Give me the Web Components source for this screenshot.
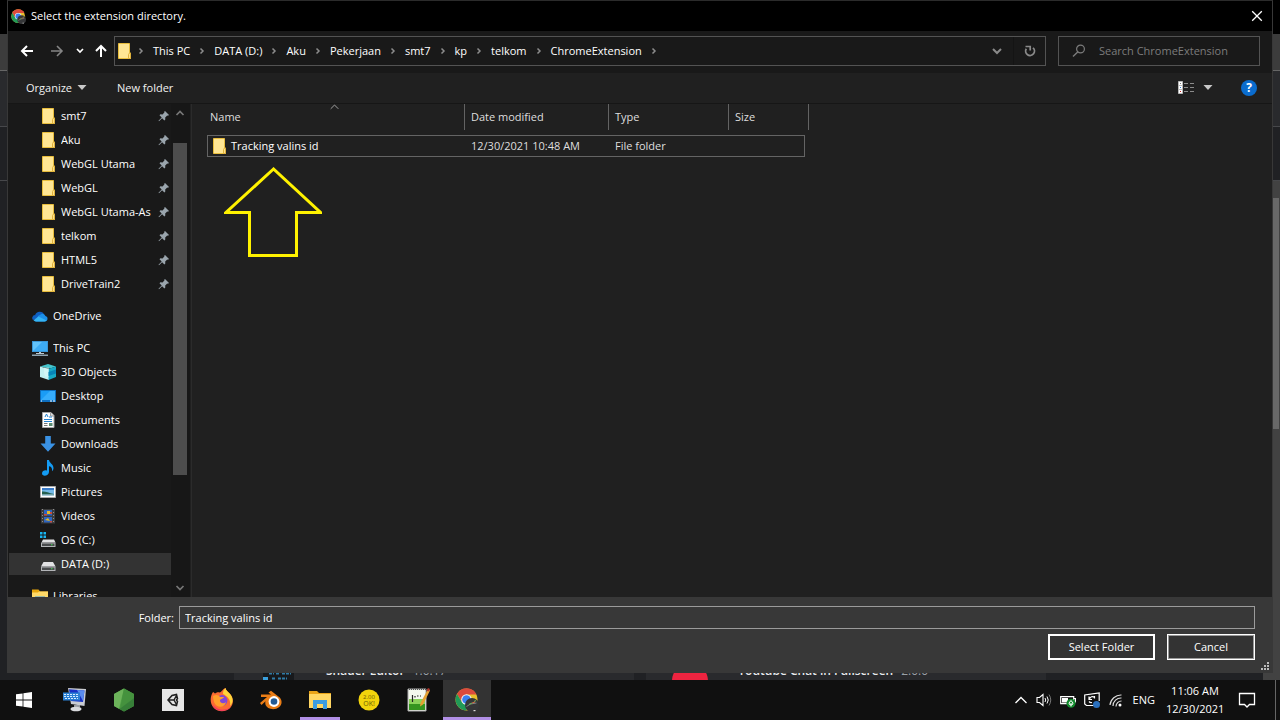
<!DOCTYPE html>
<html lang="en">
<head>
<meta charset="utf-8">
<title>Select the extension directory.</title>
<style>
  html, body { margin: 0; height: 100%; background: #202124; }
  body { font: 11px/16px "Open Sans", "Noto Sans", sans-serif; color: #fff; overflow: hidden; }
</style>
</head>
<body>
<desk-top></desk-top>

<script>
const icons = {
  folder: ['0 0 16 16', '<path d="M2.5.5h11v9.500h1v5.500h-12z" fill="#ffe28a" stroke="#e8bd3c"/><path d="M3 1h10v14H3z" fill="#ffe694"/><path d="M12.500 15.500v-4l1-1.500h1v5.500z" fill="#ffe28a" stroke="#e0b23c"/>'],
  pin: ['0 0 12 12', '<path d="M7 1l4 4-1 .8-.8-.2-2 2 .1 2-.9.9-2.300-2.300L1 11.300l-.5-.5L3.700 7.500 1.500 5.200l.9-.9 2.100.1 1.900-1.900-.2-.8z" fill="#9aa5ad"/>'],
  onedrive: ['0 0 16 16', '<path d="M3 7.500a5 5 0 0 1 9-1.500l-4 4-7 2A3 3 0 0 1 3 7z" fill="#0f5fc0"/><path d="M10 5.700a4 4 0 0 1 3.500 2.300A2.800 2.800 0 0 1 13 13.500H3.500L6 8z" fill="#1c8fe8"/><path d="M1.500 12.300 6.500 8.500l8 4a3 3 0 0 1-2 1H3.500a3 3 0 0 1-2-1.200z" fill="#35b4f4"/>'],
  pc: ['0 0 16 16', '<path d="M0 1h16v11H0z" fill="#3a97d8"/><path d="M1 2h14v9H1z" fill="#62c3fb"/><path d="M1 11 10 2h5v9z" fill="#3dacf5"/><path d="M7 12h2v1.500H7zM4 13h8v1H4z" fill="#b9c8d2"/><path d="M0 14.500h16V16H0z" fill="#8ea2af"/>'],
  cube: ['0 0 16 16', '<path d="M8 0l8 2.500-6 2L0 2.500z" fill="#45c5cc"/><path d="M0 2.500 9 5v11l-9-3z" fill="#c3f1f2"/><path d="M8.500 5 16 2.500V13l-7.500 3z" fill="#18a9c6"/><path d="M4 3.500h5v9H5L4 9z" fill="#e2fbfa" opacity=".5"/><path d="M8.500 8 16 5.500v4L8.500 12z" fill="#0784b8"/>'],
  desktop: ['0 0 16 16', '<path d="M0 2h16v12H0z" fill="#0d6fc0"/><path d="M1 3h14v9H1z" fill="#1a9cf6"/><path d="M1 12 10 3h5v9z" fill="#36adfc"/><path d="M1 12.500h1v1H1zM10 12.500h2v1h-2zM13 12.500h2v1h-2z" fill="#fff"/>'],
  document: ['0 0 16 16', '<path d="M2.500.5h8.500l3 3v12h-11.500z" fill="#fff" stroke="#a8a8a8"/><path d="M10.500.5v3.500H14" fill="#ddd" stroke="#999"/><path d="M5 5l1.500-3L8 5M9 5h3M4 7.500h8M4 9.500h8" stroke="#2482d0" fill="none"/><path d="M4 11.500h3.500M4 13.500h3.500" stroke="#777"/><path d="M9 11h3.500v3H9z" fill="#5c8d72"/>'],
  download: ['0 0 16 16', '<path d="M5.200 0h5.600v7.500H15.500L8 15.800.5 7.500h4.700z" fill="#3a92e4"/>'],
  music: ['0 0 16 16', '<path d="M7 0h2c.2 3 4.500 4 4.500 8 0 1.500-.7 2.500-1.500 3.300C12.500 8 11 6.500 9 6.200V12c0 4-7 5-7 1.500 0-2.500 3-3.800 5-2.800z" fill="#149cf4"/>'],
  picture: ['0 0 16 16', '<path d="M.5 2.500h15v11H.5z" fill="#fff" stroke="#a9a9a9"/><path d="M2 4h12v8H2z" fill="#74b9e8"/><path d="M2 4h12v2H2z" fill="#3a7bc8"/><path d="M2 7.500c3-.5 6 1 12 2.500v.8H2z" fill="#25614f"/><path d="M2 10.500h12V12H2z" fill="#a9cbd8"/>'],
  video: ['0 0 16 16', '<path d="M1 1h14v14.500H1z" fill="#3c3c3c"/><path d="M4 2h8v5.500H4zM4 9h8v5.500H4z" fill="#2d65c0"/><path d="M7 3h3v3H7zM5 12l3-2 2 3z" fill="#e5b827"/><path d="M4 6h3v1.500H4zM10 4h2v2h-2zM10 13h2v1.500h-2z" fill="#c94b38"/><path d="M2.500 1v15M13.500 1v15" stroke="#8c8c8c" stroke-width="1" stroke-dasharray="1 2"/>'],
  osdrive: ['0 0 16 16', '<path d="M0 0h2.500v2.500H0zM3.500 0H6v2.500H3.500zM0 3.500h2.500V6H0zM3.500 3.500H6V6H3.500z" fill="#18b5f2"/><path d="M3 7.500h11l1.500 3h-14z" fill="#e2e2e4"/><path d="M1 10.500h14.500V15H1z" fill="#b3b5b8"/><path d="M2 11.500h12.500V14H2z" fill="#494b4d"/><path d="M11 12.300h1.500v1H11z" fill="#42e052"/>'],
  drive: ['0 0 16 16', '<path d="M3.500 6h9.500l2.500 4.500h-14.500z" fill="#e2e2e4"/><path d="M1 10.500h14.500V15H1z" fill="#b3b5b8"/><path d="M2 11.500h12.500V14H2z" fill="#494b4d"/><path d="M11 12.300h1.500v1H11z" fill="#42e052"/>'],
  library: ['0 0 16 16', '<path d="M0 1.500h6.500L8 3.500h8V8H0z" fill="#e8a60c"/><path d="M0 4.500h6l1-1h9V16H0z" fill="#ffd968"/><path d="M3 8.500h10V16H3z" fill="#3c9be0"/>'],
  back: ['0 0 14 14', '<path d="M13 7H2M7 2 2 7l5 5" fill="none" stroke="currentColor" stroke-width="2"/>'],
  forward: ['0 0 14 14', '<path d="M1 7h11M7 2l5 5-5 5" fill="none" stroke="currentColor" stroke-width="1.600"/>'],
  up: ['0 0 14 14', '<path d="M7 13V2M2 7l5-5 5 5" fill="none" stroke="currentColor" stroke-width="2"/>'],
  down: ['0 0 8 8', '<path d="M1 2l3 3 3-3" fill="none" stroke="currentColor" stroke-width="1.700"/>'],
  bigdown: ['0 0 12 12', '<path d="M2 4l4 4 4-4" fill="none" stroke="currentColor" stroke-width="2"/>'],
  crumb: ['0 0 8 8', '<path d="M2.500 1.500 5 4 2.500 6.500" fill="none" stroke="#8c8c8c" stroke-width="1.500"/>'],
  refresh: ['0 0 12 12', '<path d="M2.300 3.800A4.400 4.400 0 1 0 9 2.800" fill="none" stroke="currentColor" stroke-width="1.800"/><path d="M1.500 1.500h4.700v4" fill="none" stroke="currentColor" stroke-width="1.700"/>'],
  search: ['0 0 14 14', '<circle cx="8.500" cy="5" r="3.900" fill="none" stroke="#7c7c7c" stroke-width="1.200"/><path d="M5.700 8 1 12.500" stroke="#7c7c7c" stroke-width="1.400"/>'],
  close: ['0 0 12 12', '<path d="M1.200 1.200l9.600 9.600M10.800 1.200 1.200 10.800" stroke="#fff" stroke-width="1.300"/>'],
  triangle: ['0 0 10 6', '<path d="M.5 0h9L5 5z" fill="currentColor"/>'],
  sort: ['0 0 9 6', '<path d="M.7 4.800 4.500 1l3.800 3.800" fill="none" stroke="#a0a0a0"/>'],
  view: ['0 0 17 14', '<path d="M.5.5h4v12h-4z" fill="#fff" stroke="#b8b8b8"/><path d="M0 4.500h5M0 8.500h5" stroke="#b8b8b8"/><path d="M2 2h1v1H2z" fill="#777"/><path d="M2 6h1v1H2z" fill="#2976d2"/><path d="M2 10h1v1H2z" fill="#c22"/><path d="M6 2.500h4M12 2.500h4M6 6.500h4M12 6.500h4M6 10.500h4M12 10.500h4" stroke="#8b8b8b"/>'],
  scrollup: ['0 0 10 8', '<path d="M1.500 6 5 2.500 8.500 6" fill="none" stroke="#777" stroke-width="1.700"/>'],
  scrolldown: ['0 0 10 8', '<path d="M1.500 2 5 5.500 8.500 2" fill="none" stroke="#777" stroke-width="1.700"/>'],
  grip: ['0 0 9 9', '<path d="M6 0h2v2H6zM3 3h2v2H3zM6 3h2v2H6zM0 6h2v2H0zM3 6h2v2H3zM6 6h2v2H6z" fill="#bdbdbd"/>'],
  chrome: ['0 0 24 24', '<circle cx="11.500" cy="11.500" r="11" fill="#e8bf2c"/><path d="M2 6A11 11 0 0 1 21.500 6.500H11.500L7 14z" fill="#dc4a3d"/><path d="M2 6a11 11 0 0 0 9 16.500l5-8.500-9.500-.5z" fill="#219a57"/><circle cx="11.500" cy="11.500" r="5.300" fill="#f3f5f8"/><circle cx="11.500" cy="11.500" r="4.300" fill="#3b7ff0"/><circle cx="17" cy="17" r="7" fill="#353638"/><path d="M11.500 18.500l4-2.500 6-1" stroke="#7d8185" fill="none"/><path d="M14 16.500l3-1.500M19 13.500l2-1" stroke="#6ca857" stroke-width="1.200"/><path d="M17 15l3-1" stroke="#d06a42"/><path d="M18.500 22h2v1.200h-2z" fill="#ddd"/>'],
  windows: ['0 0 16 16', '<path d="M0 2.300 6.600 1.400v6.200H0zM7.400 1.300 16 0v7.600H7.400zM0 8.400h6.600v6.200L0 13.700zM7.400 8.400H16V16l-8.600-1.300z" fill="#fff"/>'],
  keyboardpc: ['0 0 24 24', '<path d="M5 0 23 1l-1.500 17L8 16z" fill="#c9ccd2"/><path d="M6 1.300 21.500 2.500 20 14 8 13z" fill="#1832c4"/><path d="M14 1.900l7.500.6L20 13z" fill="#5a8cf0"/><path d="M0 4.500h17v8H0z" fill="#2b80d4"/><path d="M1 6.500h15M1 8.500h15M2 10.500h13" stroke="#d5ecff" stroke-dasharray="2 1"/><path d="M11 17h6v2.500H11z" fill="#9a9da3"/><ellipse cx="13" cy="21" rx="5.500" ry="2.300" fill="#d9dadd"/>'],
  node: ['0 0 24 24', '<path d="M12 .5 22 6v12l-10 5.500L2 18V6z" fill="#4f9e45"/><path d="M12 .5 2 6v12l5 2.800z" fill="#6cb35a"/><path d="M12 .5 22 6v4L8 21z" fill="#45923e"/><path d="M22 10v8l-10 5.500L7.500 21z" fill="#377f38"/>'],
  unity: ['0 0 24 24', '<path d="M1 1h22v22H1z" fill="#e6e6e6"/><path d="M7 12l4-4.500 4.500-1 1 4-1 1.500 1 1.500-1 4-4.500-1zM7 12h6M13 12l2.500-4.500M13 12l2.500 4.500" fill="none" stroke="#202020" stroke-width="1.500"/>'],
  firefox: ['0 0 24 24', '<path d="M3 4c.4-.2 1 .8 2 1.500C7 4 8.500 4 9.500 4.500 12 4 12.500 1 15.500 0c.3 2.500 3 4 5 6.500 3 4 3.300 9 0 13-4 4.500-12 5-16.500.7C-.2 16-.3 9 3 4z" fill="#fb6b32"/><path d="M15.500 0c.3 2.500 3 4 5 6.500 3 4 3 8-.5 11.500C21.500 12 17 8 13 6c0-3 1-5 2.500-6z" fill="#ffd43a"/><path d="M2 16c3 8 14 9 19 3-4 3-8 3-11 2.500S4 18 2 16z" fill="#f0316b"/><circle cx="12" cy="12.500" r="5.400" fill="#8047d9"/><path d="M3 8c3-2 6-1 7 1h4c-1 2-4 2-4 3.500 0 3 4 3.500 6 1.500-1 6-10 6.500-12 0-.5-2-1-4-1-6z" fill="#ff9f2b"/>'],
  blender: ['0 0 24 24', '<path d="M2 6.500h10L9.500 4.500 12 2.800l9 7c5 7-3 13-9.500 11-4-1-6-4-5-7.500L2.500 17 1 15l7-6H2z" fill="#ea7d16"/><circle cx="15" cy="13.500" r="5.400" fill="#fff"/><circle cx="15" cy="13.500" r="3.300" fill="#235b94"/>'],
  explorer: ['0 0 24 24', '<path d="M1 3h8l2 2h12v5H1z" fill="#e9a317"/><path d="M1 6h22v14H1z" fill="#ffd663"/><path d="M5 12h14v9h-4v-5H9v5H5z" fill="#3c9ce0"/>'],
  okbadge: ['0 0 24 24', '<circle cx="12" cy="12" r="10.500" fill="#f2d40c"/><text x="12" y="10.500" text-anchor="middle" font-size="6" fill="#6c6006">2.00</text><text x="12" y="17.500" text-anchor="middle" font-size="7" fill="#6c6006">OK!</text>'],
  notepad: ['0 0 24 24', '<path d="M2 1h18v22H2z" fill="#f4f8ee" stroke="#aaa"/><path d="M3 11h16v11H3z" fill="#8ad25a"/><path d="M3 16h16v6H3z" fill="#34951f"/><path d="M3 1.500h17" stroke="#555" stroke-dasharray="1 1"/><path d="M6.500 7v7M9 8v1.500M11 8h1.500M14 8h1" stroke="#222" stroke-width="1.200"/><path d="M22 1l2 1.500-7 14-3 2 .5-3.500z" fill="#e4a132"/><path d="M22 0l2 1-1.500 2.500-2-1z" fill="#b4342c"/>'],
  trayup: ['0 0 14 14', '<path d="M1.500 10 7 4.500 12.500 10" fill="none" stroke="#fff" stroke-width="1.300"/>'],
  speaker: ['0 0 16 16', '<path d="M1 5.500h2.500L7 2.500v11L3.500 10.500H1z" fill="none" stroke="#fff" stroke-width="1.100"/><path d="M9 6q1.500 2 0 4M11 4.500q2.500 3.500 0 7" fill="none" stroke="#fff"/><path d="M13 2.500q3.500 5.500 0 11" fill="none" stroke="#777"/>'],
  battery: ['0 0 16 16', '<path d="M.7 4.700h13v7H.7zM14 6.500h1.500v3.500H14" fill="none" stroke="#fff" stroke-width="1.200"/><path d="M2 6h6v4.500H2z" fill="#fff"/><circle cx="11" cy="11.200" r="4.500" fill="#118a2c"/><path d="M11 8.500 9 11q0 2 2 2t2-2zM11 11v3.500" fill="none" stroke="#fff"/>'],
  sync: ['0 0 16 16', '<path d="M10 13.500H2.500L.7 12V3l14.500-2v8" fill="none" stroke="#fff" stroke-width="1.200"/><path d="M10.500 5.500a3 3 0 0 0-5 1.500M5 4.500v3h3M5 9.500a3 3 0 0 0 3 1M10.500 4v2.500" fill="none" stroke="#fff" stroke-width="1.200"/><circle cx="12.500" cy="12.500" r="3.500" fill="#2b70bd"/>'],
  wifi: ['0 0 16 16', '<path d="M2 13A11 11 0 0 1 13.500 3M5 14a8 8 0 0 1 8.500-8M8 14.500A5.500 5.500 0 0 1 13.500 9" fill="none" stroke="#ddd" stroke-width="1.200"/><circle cx="12" cy="13" r="1.500" fill="#fff"/>'],
  notice: ['0 0 18 18', '<path d="M1.500 2.500h15v11H11.500L9 16l-2.500-2.500h-5z" fill="none" stroke="#fff" stroke-width="1.300"/>'],
  arrow: ['0 0 98 90', '<path d="M49.500 2 2 45.500h23.500v43h47v-43H96.500z" fill="none" stroke="#fff200" stroke-width="3"/>'],
  shader: ['0 0 36 36', '<path d="M3 0h31v36H3z" fill="#17191c"/><path d="M3 14h5v22H3z" fill="#3aa0dc"/><path d="M9 10.500h5M16 10.500h4M22 10.500h9M12 15.500h4M18 15.500h9" stroke="#2f7ba6" stroke-width="2" stroke-dasharray="3 1"/>'],
  red: ['0 0 36 36', '<circle cx="18" cy="18" r="18" fill="#ee2440"/>'],
};

function define(name, markup, setup) {
  const template = document.createElement('template');
  template.innerHTML = '<style>*{box-sizing:border-box}button,input{font:inherit;color:inherit;border:0;background:none;margin:0;padding:0;outline:0}button{display:flex;align-items:center;justify-content:center}a{color:inherit;text-decoration:none}</style>' + markup;
  customElements.define(name, class extends HTMLElement {
    constructor() {
      super();
      this.attachShadow({ mode: 'open' }).append(template.content.cloneNode(true));
    }
    connectedCallback() { if (setup) setup(this, this.shadowRoot); }
  });
}

// <ui-icon name size> draws one entry of the icon table; height follows the viewBox.
define('ui-icon', '<style>:host{display:block;flex:none;line-height:0}svg{display:block}</style><div></div>', (el, root) => {
  const [box, body] = icons[el.getAttribute('name')];
  const [, , w, h] = box.split(' ').map(Number);
  const width = Number(el.getAttribute('size')) || w;
  root.querySelector('div').innerHTML =
    `<svg width="${width}" height="${Math.round(width * h / w)}" viewBox="${box}" aria-hidden="true">${body}</svg>`;
});

define('nav-item', `
<style>
  :host{display:block;border:solid transparent;border-width:1px 0;background-clip:padding-box}
  :host([selected]){background-color:#333}
  a{display:flex;align-items:center;gap:5px;height:22px;padding:0 1px 0 31px}
  :host([top]) a{padding-left:23px}
  span{flex:1;overflow:hidden;white-space:nowrap}
  #pin{margin-left:-2px}
</style>
<a href="#"><ui-icon id="icon"></ui-icon><span><slot></slot></span><ui-icon id="pin" name="pin"></ui-icon></a>`, (el, root) => {
  if (!el.hasAttribute('pinned')) root.querySelector('#pin').remove();
});

define('scroll-bar', `
<style>
  :host{display:flex;flex-direction:column;width:20px;padding:0 3px 0 2px;background:#171717;border-right:1px solid #202020}
  button{height:18px;width:15px;padding-right:1px}
  .before{flex:21}.thumb{flex:332;background:#4d4d4d}.after{flex:104}
</style>
<button aria-label="Scroll up"><ui-icon name="scrollup"></ui-icon></button>
<div class="before"></div><div class="thumb"></div><div class="after"></div>
<button aria-label="Scroll down"><ui-icon name="scrolldown"></ui-icon></button>`);

define('folder-tree', `
<style>
  :host{display:flex;width:184px;flex:none;background:#191919;border-right:1px solid #2b2b2b;min-height:0}
  nav{flex:1;min-width:0;padding-left:1px;overflow:hidden}
  section + section{margin-top:8px}
</style>
<nav aria-label="Folders"></nav><scroll-bar></scroll-bar>`, (el, root) => {
  const groups = [
    ['smt7', 'Aku', 'WebGL Utama', 'WebGL', 'WebGL Utama-As', 'telkom', 'HTML5', 'DriveTrain2'].map(t => [t, 'folder', 'pinned']),
    [['OneDrive', 'onedrive', 'top']],
    [['This PC', 'pc', 'top'], ['3D Objects', 'cube'], ['Desktop', 'desktop'], ['Documents', 'document'], ['Downloads', 'download'],
     ['Music', 'music'], ['Pictures', 'picture'], ['Videos', 'video'], ['OS (C:)', 'osdrive'], ['DATA (D:)', 'drive', 'selected']],
    [['Libraries', 'library', 'top']],
  ];
  for (const group of groups) {
    const section = document.createElement('section');
    for (const [text, icon, flag] of group) {
      const item = document.createElement('nav-item');
      item.textContent = text;
      if (flag) item.setAttribute(flag, '');
      item.shadowRoot.querySelector('#icon').setAttribute('name', icon);
      section.append(item);
    }
    root.querySelector('nav').append(section);
  }
});

define('title-bar', `
<style>
  :host{display:flex;align-items:center;height:30px;padding:0 9px 0 3px;background:#000;gap:5px}
  h1{flex:1;margin:0;font-size:11px;font-weight:400}
  button{width:12px;height:12px}
</style>
<ui-icon name="chrome" size="15"></ui-icon><h1><slot></slot></h1>
<button aria-label="Close"><ui-icon name="close"></ui-icon></button>`);

define('path-bar', `
<style>
  :host{display:flex;flex:1;height:30px;border:1px solid #535353;align-items:center;padding-left:1px}
  ol{display:flex;flex:1;margin:0;padding:0;list-style:none;white-space:nowrap}
  li{display:flex;align-items:center}
  li ui-icon{padding:0 8px}
  li:first-child ui-icon{padding-left:5px}
  button{height:28px;width:33px;color:#8a8a8a}
  .refresh{width:32px;border-left:1px solid #141414}
</style>
<ui-icon name="folder"></ui-icon>
<ol></ol>
<button aria-label="Previous locations"><ui-icon name="bigdown"></ui-icon></button>
<button class="refresh" aria-label="Refresh"><ui-icon name="refresh"></ui-icon></button>`, (el, root) => {
  const ol = root.querySelector('ol');
  ol.innerHTML = '<li><ui-icon name="crumb"></ui-icon></li>' + ['This PC', 'DATA (D:)', 'Aku', 'Pekerjaan', 'smt7', 'kp', 'telkom', 'ChromeExtension']
    .map(t => `<li><a href="#">${t}</a><ui-icon name="crumb"></ui-icon></li>`).join('');
});

define('search-box', `
<style>
  :host{display:flex;align-items:center;width:202px;height:30px;border:1px solid #535353;padding-left:13px;gap:13px}
  input{flex:1;min-width:0}
  input::placeholder{color:#7c7c7c;opacity:1}
</style>
<ui-icon name="search"></ui-icon><input type="search" aria-label="Search" placeholder="Search ChromeExtension">`);

define('address-row', `
<style>
  :host{display:flex;align-items:center;height:42px;padding:0 12px 2px;background:#191919}
  button{height:20px;width:14px;margin-right:16px}
  button.off{color:#858585;margin-right:12px}
  button.small{width:8px;margin-right:10px}
  button.up{margin-right:6px}
  search-box{margin-left:12px}
</style>
<button aria-label="Back"><ui-icon name="back"></ui-icon></button>
<button class="off" aria-label="Forward"><ui-icon name="forward"></ui-icon></button>
<button class="small" aria-label="Recent locations"><ui-icon name="down"></ui-icon></button>
<button class="up" aria-label="Up"><ui-icon name="up"></ui-icon></button>
<path-bar></path-bar><search-box></search-box>`);

define('command-row', `
<style>
  :host{display:flex;align-items:center;height:31px;padding:0 15px 0 18px;background:#202020;border-bottom:1px solid #161616;color:#f0f0f0}
  button{gap:5px}
  ui-icon[name=triangle]{color:#c8c8c8}
  .new{margin-left:30px}
  .view{margin-left:auto;gap:8px}
  .help{width:16px;height:16px;margin-left:28px;border-radius:50%;background:#0a6cce;color:#fff;font-weight:700;font-size:12px}
</style>
<button>Organize<ui-icon name="triangle"></ui-icon></button>
<button class="new">New folder</button>
<button class="view" aria-label="Change your view"><ui-icon name="view"></ui-icon><ui-icon name="triangle"></ui-icon></button>
<button class="help" aria-label="Help">?</button>`);

define('file-list', `
<style>
  :host{display:block;position:relative;flex:1;min-width:0;background:#202020;padding-left:15px;overflow:hidden}
  table{table-layout:fixed;width:602px;border-spacing:0;text-align:left;color:#dedede}
  th,td{padding:0 0 0 6px;font-weight:400;white-space:nowrap}
  th{height:26px;border-right:1px solid #636363}
  th:first-child{padding-left:3px}
  .name{position:relative}
  .name ui-icon{position:absolute;left:123px;top:0}
  tbody::before{content:"";display:block;height:5px}
  td{height:22px;border:solid #646464;border-width:1px 0}
  td:first-child{border-left-width:1px;padding-left:3px}
  td:nth-child(4){border-right-width:1px}
  td:last-child{border:0;padding:0}
  td a{display:flex;align-items:center;gap:4px;color:#fff}
  .pointer{position:absolute;left:32px;top:63px}
</style>
<table>
  <colgroup><col style="width:258px"><col style="width:144px"><col style="width:120px"><col style="width:76px"><col style="width:4px"></colgroup>
  <thead><tr><th class="name">Name<ui-icon name="sort"></ui-icon></th><th>Date modified</th><th>Type</th><th colspan="2">Size</th></tr></thead>
  <tbody><tr><td><a href="#"><ui-icon name="folder"></ui-icon>Tracking valins id</a></td><td>12/30/2021 10:48 AM</td><td>File folder</td><td></td><td></td></tr></tbody>
</table>
<ui-icon class="pointer" name="arrow"></ui-icon>`);

define('dialog-footer', `
<style>
  :host{display:block;position:relative;background:#383838;height:75px;padding:9px 17px 0 0}
  .field{display:flex;align-items:center}
  label{width:166px;margin-right:5px;text-align:right}
  input{flex:1;min-width:0;height:23px;border:1px solid #9b9b9b;padding:0 5px}
  .actions{display:flex;justify-content:flex-end;gap:12px;margin-top:5px}
  button{height:26px;width:88px;background:#333;border:1px solid #fff;box-shadow:inset 0 0 0 1px #999}
  button.main{width:107px;border-width:2px;box-shadow:none}
  ui-icon{position:absolute;right:2px;bottom:1px}
</style>
<div class="field"><label for="folder">Folder:</label><input id="folder" type="text" value="Tracking valins id"></div>
<div class="actions"><button class="main">Select Folder</button><button>Cancel</button></div>
<ui-icon name="grip"></ui-icon>`);

define('folder-dialog', `
<style>
  :host{display:flex;flex-direction:column;min-height:0;min-width:0;border:1px solid #383838;border-top-color:#2b2b2b}
  main{display:flex;flex:1;min-height:0}
</style>
<title-bar>Select the extension directory.</title-bar>
<address-row></address-row>
<command-row></command-row>
<main><folder-tree></folder-tree><file-list></file-list></main>
<dialog-footer></dialog-footer>`);

define('extension-card', `
<style>
  :host{display:flex;align-items:flex-start;flex:1;height:17px;padding-left:26px;background:#292a2d;overflow:hidden;white-space:nowrap;color:#9aa0a6;font-size:12px}
  ui-icon{margin-right:30px}
  b{font-weight:600;color:#e8eaed;margin-right:8px}
</style>
<ui-icon id="logo"></ui-icon><b><slot></slot></b><span><slot name="version"></slot></span>`);

define('browser-page', `
<style>
  :host{display:flex;flex-direction:column;min-height:0;min-width:0;overflow:hidden;background:#202124}
  .tabs{height:34px;background:#000}
  .tools{height:37px;background:#3c3c3c;border-bottom:1px solid #666}
  .heading{height:56px;background:#292a2d;border-bottom:1px solid #47484b}
  .body{flex:1;min-height:0;display:flex;flex-direction:column}
  .dev{height:54px;border-bottom:1px solid #47484b}
  .lower{flex:1;min-height:0;display:flex;justify-content:flex-end}
  .cards{flex:1;align-self:flex-end;display:flex;justify-content:center;gap:12px;padding-left:17px}
  extension-card{max-width:400px}
  .scroll{width:17px;background:#424242;display:flex;flex-direction:column;padding:17px 1px 0 10px}
  .thumb{height:48%;background:#686868}
</style>
<div class="tabs"></div><div class="tools"></div><div class="heading"></div>
<div class="body"><div class="dev"></div>
  <div class="lower"><div class="cards"></div><div class="scroll"><div class="thumb"></div></div></div>
</div>`, (el, root) => {
  for (const [title, version, logo] of [['Shader Editor', '1.0.17', 'shader'], ['Youtube Chat in Fullscreen', '2.0.0', 'red']]) {
    const card = document.createElement('extension-card');
    card.innerHTML = `${title}<span slot="version">${version}</span>`;
    card.shadowRoot.querySelector('#logo').setAttribute('name', logo);
    root.querySelector('.cards').append(card);
  }
});

define('task-bar', `
<style>
  :host{display:flex;height:40px;background:#101010;min-width:0}
  .apps{display:flex;gap:1px;flex:1}
  .apps button{width:48px;height:40px;border-bottom:3px solid transparent;padding-top:3px}
  .apps .start{width:50px;padding-right:2px}
  .apps .open{position:relative}
  .apps .open::after{content:"";position:absolute;left:4px;right:4px;bottom:-3px;height:3px;background:#b18fe6}
  .apps .active{background:#333;border-color:#b18fe6}
  .tray{display:flex;align-items:center;gap:8px}
  .tray button{height:40px}
  .clock{text-align:center;line-height:18px;width:58px;margin-left:3px;white-space:nowrap}
  .lang{margin-left:1px}
  .notice{margin:0 19px 0 6px}
  .show{width:5px;border-left:1px solid #666}
</style>
<div class="apps">
  <button class="start" aria-label="Start"><ui-icon name="windows"></ui-icon></button>
  <button aria-label="On-screen display"><ui-icon name="keyboardpc"></ui-icon></button>
  <button aria-label="Node"><ui-icon name="node"></ui-icon></button>
  <button aria-label="Unity"><ui-icon name="unity"></ui-icon></button>
  <button aria-label="Firefox"><ui-icon name="firefox"></ui-icon></button>
  <button aria-label="Blender"><ui-icon name="blender"></ui-icon></button>
  <button class="open" aria-label="File Explorer"><ui-icon name="explorer"></ui-icon></button>
  <button><ui-icon name="okbadge"></ui-icon></button>
  <button aria-label="Notepad"><ui-icon name="notepad"></ui-icon></button>
  <button class="active" aria-label="Chrome"><ui-icon name="chrome"></ui-icon></button>
</div>
<div class="tray">
  <button aria-label="Hidden icons"><ui-icon name="trayup"></ui-icon></button>
  <button aria-label="Volume"><ui-icon name="speaker"></ui-icon></button>
  <button aria-label="Battery"><ui-icon name="battery"></ui-icon></button>
  <button aria-label="Sync"><ui-icon name="sync"></ui-icon></button>
  <button aria-label="Network"><ui-icon name="wifi"></ui-icon></button>
  <button class="lang">ENG</button>
  <div class="clock">11:06 AM<br>12/30/2021</div>
  <button class="notice" aria-label="Notifications"><ui-icon name="notice"></ui-icon></button>
</div>
<button class="show" aria-label="Show desktop"></button>`);

define('desk-top', `
<style>
  :host{display:flex;flex-direction:column;height:100vh}
  .stage{flex:1;min-height:0;display:grid;grid-template:minmax(0,1fr)/minmax(0,1fr)}
  browser-page,folder-dialog{grid-area:1/1}
  folder-dialog{margin:0 7px 7px;z-index:1}
</style>
<div class="stage"><browser-page></browser-page><folder-dialog></folder-dialog></div>
<task-bar></task-bar>`);
</script>
</body>
</html>
